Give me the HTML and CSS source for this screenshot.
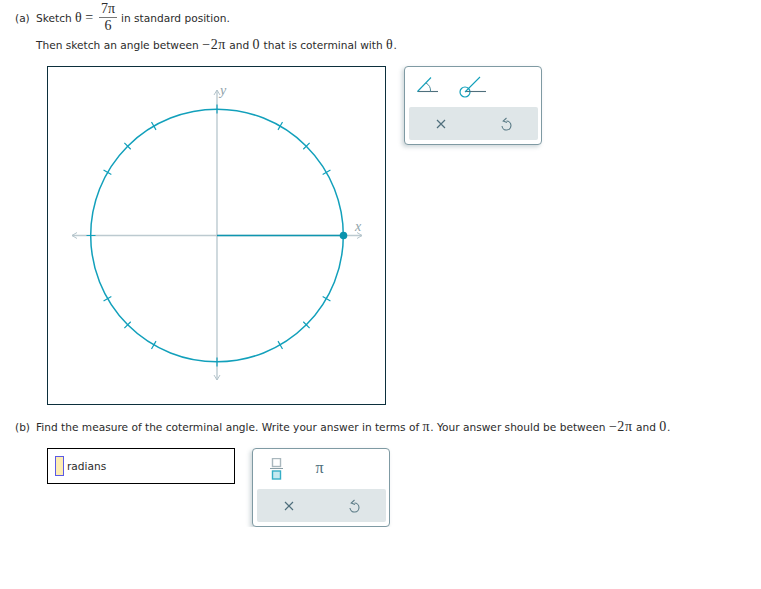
FILE: index.html
```html
<!DOCTYPE html>
<html lang="en">
<head>
<meta charset="UTF-8">
<title>Coterminal Angle</title>
<link rel="stylesheet" href="styles.css">
</head>
<body>
<svg class="defs" width="0" height="0">
    <symbol id="icon-clear" viewBox="0 0 16 16">
        <path d="M4 4 L12 12 M12 4 L4 12" fill="none" stroke="#4f6f7c" stroke-width="1.2"/>
    </symbol>
    <symbol id="icon-undo" viewBox="0 0 16 16">
        <path d="M8.500 5 A4.500 4.500 0 1 1 4 10" fill="none" stroke="#5d7d88" stroke-width="1.1"/>
        <path d="M8.500 2 L5.200 5 L9 6.500" fill="none" stroke="#5d7d88" stroke-width="1.1"/>
    </symbol>
</svg>

<div class="question">
    <div class="line first-line">
        <span class="label">(a)</span>
        <span>Sketch <span class="math">θ</span> <span class="math">=</span></span>
        <span class="fraction">
            <span class="num math">7π</span>
            <span class="den math">6</span>
        </span>
        <span>in standard position.</span>
    </div>
    <div class="line second-line">Then sketch an angle between <span class="math big">−2π</span> and <span class="math big">0</span> that is coterminal with <span class="math big">θ</span>.</div>

    <div class="graph-row">
        <div class="graph">
            <svg width="337" height="337" viewBox="48 67 337 337">
                <!-- axes -->
                <path d="M72 235.500 H362 M217 90 V380" stroke="#bccad0" stroke-width="1.400" fill="none"/>
                <path d="M77 232.500 L72 235.500 L77 238.500 M357 232.500 L362 235.500 L357 238.500 M214 95 L217 90 L220 95 M214 375 L217 380 L220 375" stroke="#b4c4cb" stroke-width="1" fill="none"/>
                <text x="220" y="95" class="axis-label">y</text>
                <text x="355" y="231" class="axis-label">x</text>
                <!-- circle and ticks -->
                <circle cx="217" cy="235.500" r="126.300" fill="none" stroke="#12a0bb" stroke-width="1.500"/>
                <g class="ticks" transform="translate(0.500 0.500)">
                    <path d="M86 235 H95 M216.500 104 V113 M216.500 357 V366"/>
                    <path d="M322.160 174 L329.950 169.500 M302.770 148.730 L309.130 142.370 M277.500 129.340 L282 121.550"/>
                    <path d="M110.840 174 L103.050 169.500 M130.230 148.730 L123.870 142.370 M155.500 129.340 L151 121.550"/>
                    <path d="M322.160 296 L329.950 300.500 M302.770 321.270 L309.130 327.630 M277.500 340.660 L282 348.450"/>
                    <path d="M110.840 296 L103.050 300.500 M130.230 321.270 L123.870 327.630 M155.500 340.660 L151 348.450"/>
                </g>
                <!-- angle -->
                <path d="M217 235.500 H343" stroke="#0f96b0" stroke-width="1.600"/>
                <circle cx="343.500" cy="235.500" r="3.800" fill="#0a93ad"/>
            </svg>
        </div>
        <div class="palette">
            <div class="tools">
                <div class="tool">
                    <svg width="30" height="20" viewBox="0 0 30 20">
                        <path d="M1.500 14.500 H22" stroke="#4f6f7c" stroke-width="1.100"/>
                        <path d="M1.500 14.500 L15 0.500" stroke="#12a0bb" stroke-width="1.100"/>
                        <path d="M10 6 A9 9 0 0 1 14.500 14.500" stroke="#4f8c9c" stroke-width="1" fill="none"/>
                    </svg>
                </div>
                <div class="tool">
                    <svg width="32" height="24" viewBox="0 0 32 24">
                        <circle cx="6" cy="17" r="5" fill="none" stroke="#12a0bb" stroke-width="1.200"/>
                        <path d="M6 16.500 H27" stroke="#4f6f7c" stroke-width="1.100"/>
                        <path d="M6 17 L21 2" stroke="#12a0bb" stroke-width="1.100"/>
                    </svg>
                </div>
            </div>
            <div class="actions">
                <svg width="16" height="16"><use href="#icon-clear"/></svg>
                <svg width="16" height="16"><use href="#icon-undo"/></svg>
            </div>
        </div>
    </div>

    <div class="line part-b">
        <span class="label">(b)</span>
        <span>Find the measure of the coterminal angle. Write your answer in terms of <span class="math big">π</span>. Your answer should be between <span class="math big">−2π</span> and <span class="math big">0</span>.</span>
    </div>

    <div class="answer-row">
        <div class="answer-box">
            <span class="blank"></span>
            <span>radians</span>
        </div>
        <div class="palette">
            <div class="tools tools-answer">
                <div class="tool">
                    <svg width="14" height="22" viewBox="0 0 14 22">
                        <rect x="2.500" y="0.500" width="8" height="8" fill="#fff" stroke="#a9b7bd" stroke-width="1.400"/>
                        <path d="M0 10.500 H13" stroke="#8a9ea6" stroke-width="1"/>
                        <rect x="2.500" y="13" width="8" height="8" fill="#c5e9f0" stroke="#35aec6" stroke-width="1.400"/>
                    </svg>
                </div>
                <div class="tool math pi">π</div>
            </div>
            <div class="actions">
                <svg width="16" height="16"><use href="#icon-clear"/></svg>
                <svg width="16" height="16"><use href="#icon-undo"/></svg>
            </div>
        </div>
    </div>
</div>
</body>
</html>
```

FILE: styles.css
```css
body {
    margin: 0;
    font-family: "DejaVu Sans", Verdana, sans-serif;
    font-size: 10.6px;
    color: #2b2b2b;
    background: #fff;
}

.defs {
    position: absolute;
}

.question {
    padding-left: 15px;
}

.line {
    display: flex;
    align-items: center;
    gap: 5px;
}

.label {
    width: 16px;
}

.math {
    font-family: "Liberation Serif", "Times New Roman", serif;
    font-style: normal;
    font-size: 14px;
}

.big {
    letter-spacing: 0.6px;
}

.first-line {
    height: 36px;
}

.fraction {
    display: flex;
    flex-direction: column;
    align-items: center;
    width: 18px;
    margin: -1px -1px 0 1px;
}

.num {
    border-bottom: 1px solid #777;
    width: 100%;
    text-align: center;
    line-height: 16px;
}

.den {
    line-height: 16px;
}

.second-line {
    display: block;
    margin-left: 21px;
    line-height: 18px;
}

.graph-row {
    display: flex;
    margin-top: 12px;
    margin-left: 32px;
    gap: 18px;
    align-items: flex-start;
}

.graph {
    width: 337px;
    height: 337px;
    border: 1px solid #0c2f3c;
}

.graph svg {
    display: block;
}

.ticks {
    stroke: #12a0bb;
    stroke-width: 1.2;
}

.axis-label {
    font-family: "Liberation Serif", serif;
    font-style: italic;
    font-size: 14px;
    fill: #8fa3ab;
}

.palette {
    box-sizing: border-box;
    width: 138px;
    height: 79px;
    border: 1px solid #7f9aa3;
    border-radius: 4px;
    background: #fff;
    box-shadow: -2px 2px 4px rgba(90, 120, 130, 0.3);
    padding: 0 3px 4px 4px;
    display: flex;
    flex-direction: column;
}

.tools {
    display: flex;
    height: 40px;
    flex: none;
}

.tools-answer {
    margin-left: -2px;
}

.tool {
    width: 44px;
    display: flex;
    align-items: center;
    justify-content: center;
}

.tools-answer .tool {
    width: 43px;
}

.tools-answer .pi {
    font-size: 16px;
    color: #4f6f7c;
    padding-bottom: 3px;
    box-sizing: border-box;
}

.actions {
    flex: 1;
    display: grid;
    grid-template-columns: 1fr 1fr;
    justify-items: center;
    align-items: center;
    background: #dfe6e8;
    border-radius: 2px;
}

.part-b {
    margin-top: 13px;
    height: 18px;
}

.answer-row {
    display: flex;
    margin-top: 12px;
    margin-left: 32px;
    gap: 17px;
    align-items: flex-start;
}

.answer-box {
    box-sizing: border-box;
    width: 188px;
    height: 36px;
    border: 1px solid #000;
    display: flex;
    align-items: center;
    gap: 3px;
    padding-left: 7px;
}

.blank {
    box-sizing: border-box;
    width: 9px;
    height: 20px;
    background: #fdecb2;
    border: 1px solid #5a5ae6;
}
```
